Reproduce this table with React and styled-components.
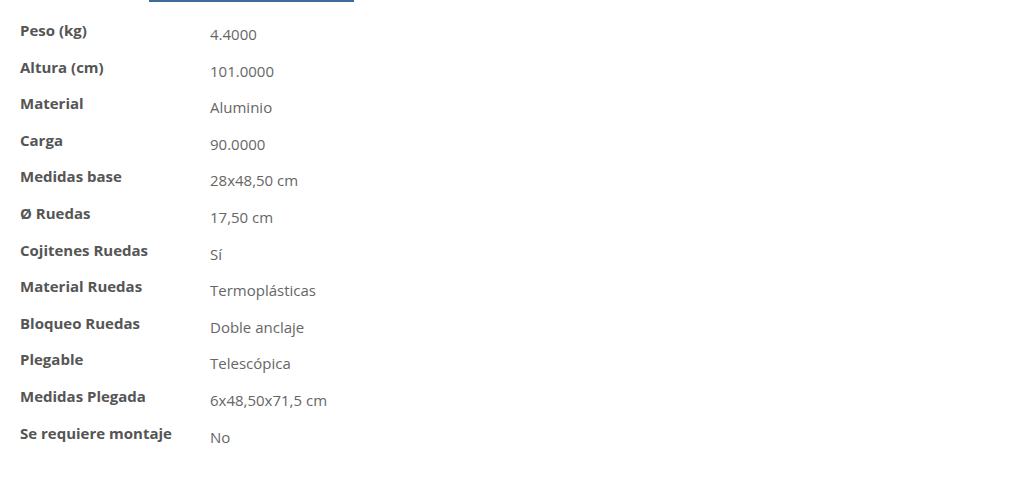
import React from "react";
import styled, { createGlobalStyle } from "styled-components";

const GlobalStyle = createGlobalStyle`
  body {
    margin: 0;
    background: #fff;
    font-family: "Open Sans", "Noto Sans", sans-serif;
  }
`;

const Page = styled.div`
  width: 1024px;
  height: 503px;
  background: #fff;
  overflow: hidden;
`;

const TabLine = styled.div`
  margin-left: 149px;
  width: 205px;
  height: 2px;
  background-color: #3b6b9b;
`;

const Table = styled.div`
  display: grid;
  grid-template-columns: 190px 1fr;
  grid-auto-rows: 36.6px;
  padding: 18px 0 0 20px;
`;

const Label = styled.div`
  font-size: 15px;
  font-weight: 700;
  color: #555;
  line-height: 20px;
`;

const Value = styled.div`
  font-size: 15px;
  font-weight: 400;
  color: #666;
  line-height: 20px;
  padding-top: 4px;
`;

const specs = [
  ["Peso (kg)", "4.4000"],
  ["Altura (cm)", "101.0000"],
  ["Material", "Aluminio"],
  ["Carga", "90.0000"],
  ["Medidas base", "28x48,50 cm"],
  ["Ø Ruedas", "17,50 cm"],
  ["Cojitenes Ruedas", "Sí"],
  ["Material Ruedas", "Termoplásticas"],
  ["Bloqueo Ruedas", "Doble anclaje"],
  ["Plegable", "Telescópica"],
  ["Medidas Plegada", "6x48,50x71,5 cm"],
  ["Se requiere montaje", "No"],
];

export default function App() {
  return (
    <Page>
      <GlobalStyle />
      <TabLine />
      <Table>
        {specs.map(([k, v]) => (
          <React.Fragment key={k}>
            <Label>{k}</Label>
            <Value>{v}</Value>
          </React.Fragment>
        ))}
      </Table>
    </Page>
  );
}
